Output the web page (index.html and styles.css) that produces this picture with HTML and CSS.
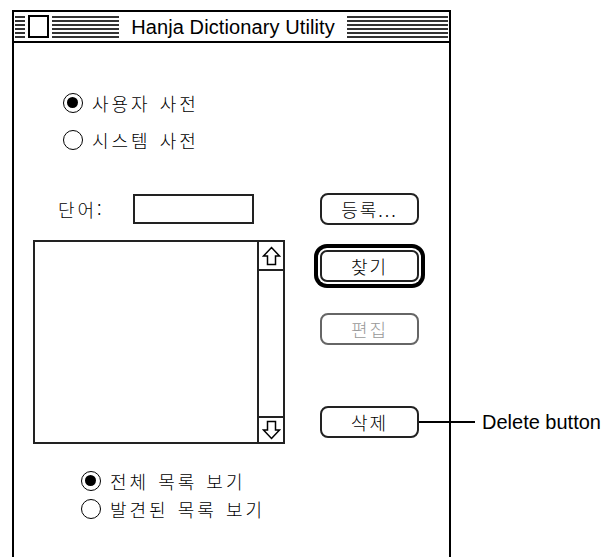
FILE: index.html
```html
<!DOCTYPE html>
<html lang="ko">
<head>
<meta charset="utf-8">
<title>Hanja Dictionary Utility</title>
<link rel="stylesheet" href="styles.css">
</head>
<body>
<div class="window">
  <div class="titlebar">
    <div class="stripes stripes-left">
      <span class="close-gap"><span class="close-box"></span></span>
    </div>
    <div class="title">Hanja Dictionary Utility</div>
    <div class="stripes stripes-right"></div>
  </div>
  <div class="window-body">
    <div class="radios radios-top">
      <div class="radio-row"><span class="radio on"></span><span class="ko">사용자 사전</span></div>
      <div class="radio-row"><span class="radio"></span><span class="ko">시스템 사전</span></div>
    </div>
    <div class="mid">
      <div class="left-col">
        <div class="word-row">
          <span class="ko word-label">단어:</span>
          <span class="field"></span>
        </div>
        <div class="list">
          <div class="list-area"></div>
          <div class="scrollbar">
            <div class="arrow-box">
              <svg width="19" height="20" viewBox="0 0 19 20"><path d="M9.5 1.5 L17.5 10 L13.5 10 L13.5 18.5 L5.5 18.5 L5.5 10 L1.5 10 Z" fill="#fff" stroke="#000" stroke-width="1.5" stroke-linejoin="miter"/></svg>
            </div>
            <div class="track"></div>
            <div class="arrow-box down">
              <svg width="19" height="20" viewBox="0 0 19 20"><path d="M9.5 18.5 L17.5 10 L13.5 10 L13.5 1.5 L5.5 1.5 L5.5 10 L1.5 10 Z" fill="#fff" stroke="#000" stroke-width="1.5" stroke-linejoin="miter"/></svg>
            </div>
          </div>
        </div>
      </div>
      <div class="right-col">
        <div class="btn btn-register ko">등록...</div>
        <div class="btn btn-default ko">찾기</div>
        <div class="btn btn-disabled ko">편집</div>
        <div class="btn btn-delete ko">삭제</div>
      </div>
    </div>
    <div class="radios radios-bottom">
      <div class="radio-row"><span class="radio on"></span><span class="ko">전체 목록 보기</span></div>
      <div class="radio-row"><span class="radio"></span><span class="ko">발견된 목록 보기</span></div>
    </div>
  </div>
</div>
<div class="callout">
  <span class="callout-line"></span>
  <span class="callout-text">Delete button</span>
</div>
</body>
</html>
```

FILE: styles.css
```css
html, body {
  margin: 0;
  padding: 0;
  background: #fff;
}
body {
  width: 607px;
  height: 557px;
  overflow: hidden;
  position: relative;
  font-family: "Liberation Sans", Arial, sans-serif;
  color: #000;
}
.ko {
  font-family: "Noto Sans CJK KR", "Liberation Sans", sans-serif;
  font-size: 18px;
  font-weight: 300;
  letter-spacing: 3px;
  word-spacing: 1px;
  line-height: 1;
}
.window {
  margin: 10px 0 0 12px;
  width: 435px;
  height: 560px;
  border: 2px solid #000;
  border-bottom: none;
  display: flex;
  flex-direction: column;
}
.titlebar {
  height: 29px;
  border-bottom: 2px solid #000;
  display: flex;
  align-items: center;
  padding: 0 1px;
}
.stripes {
  height: 22px;
  background: repeating-linear-gradient(to bottom, #333 0, #333 2px, #fff 2px, #fff 4px);
  display: flex;
  align-items: center;
}
.stripes-left {
  width: 104px;
  padding-left: 10px;
  box-sizing: border-box;
}
.stripes-right {
  flex: 1;
}
.close-gap {
  background: #fff;
  padding: 0 3px;
  height: 24px;
  display: flex;
  align-items: center;
}
.close-box {
  width: 17px;
  height: 19px;
  border: 2px solid #000;
  background: #fff;
  display: block;
}
.title {
  width: 228px;
  text-align: center;
  font-size: 20px;
  letter-spacing: 0.1px;
  line-height: 22px;
}
.window-body {
  display: flex;
  flex-direction: column;
}
.radios-top {
  padding: 41px 0 0 49px;
}
.radios-top .radio-row {
  height: 37px;
}
.radio-row {
  display: flex;
  align-items: center;
  gap: 9px;
}
.radio {
  width: 20px;
  height: 20px;
  box-sizing: border-box;
  border: 1.5px solid #000;
  border-radius: 50%;
  position: relative;
  flex: none;
}
.radio.on::after {
  content: "";
  position: absolute;
  left: 3px;
  top: 3px;
  width: 11px;
  height: 11px;
  border-radius: 50%;
  background: #000;
}
.mid {
  display: flex;
  margin-top: 35px;
  padding-left: 19px;
  gap: 35px;
}
.left-col {
  width: 252px;
  display: flex;
  flex-direction: column;
}
.word-row {
  margin-top: 1px;
  height: 30px;
  display: flex;
  align-items: center;
  padding-left: 25px;
}
.word-label {
  width: 75px;
}
.field {
  width: 121px;
  height: 30px;
  box-sizing: border-box;
  border: 2px solid #222;
}
.list {
  margin-top: 16px;
  height: 204px;
  box-sizing: border-box;
  border: 2px solid #222;
  display: flex;
}
.list-area {
  flex: 1;
}
.scrollbar {
  width: 24px;
  border-left: 2px solid #222;
  display: flex;
  flex-direction: column;
}
.arrow-box {
  height: 27px;
  border-bottom: 2px solid #222;
  display: flex;
  align-items: center;
  justify-content: center;
}
.arrow-box.down {
  border-bottom: none;
  border-top: 2px solid #222;
  height: 24px;
}
.track {
  flex: 1;
}
.right-col {
  width: 99px;
  display: flex;
  flex-direction: column;
}
.btn {
  height: 32px;
  box-sizing: border-box;
  border: 2px solid #222;
  border-radius: 8px;
  display: flex;
  align-items: center;
  justify-content: center;
  background: #fff;
}
.btn.ko {
  letter-spacing: 2px;
}
.btn-register {
  margin-top: 0;
}
.btn-default {
  margin-top: 25px;
  box-shadow: 0 0 0 2px #fff, 0 0 0 6px #000;
  border-radius: 7px;
}
.btn-disabled {
  margin-top: 31px;
  color: #999;
  border-color: #666;
}
.btn-delete {
  margin-top: 61px;
}
.radios-bottom {
  margin-top: 23px;
  padding-left: 67px;
}
.radios-bottom .radio-row {
  height: 28px;
}
.callout {
  position: absolute;
  left: 419px;
  top: 410px;
  height: 24px;
  display: flex;
  align-items: center;
}
.callout-line {
  width: 56px;
  height: 2px;
  background: #000;
}
.callout-text {
  margin-left: 7px;
  font-size: 20px;
  white-space: nowrap;
}
```
